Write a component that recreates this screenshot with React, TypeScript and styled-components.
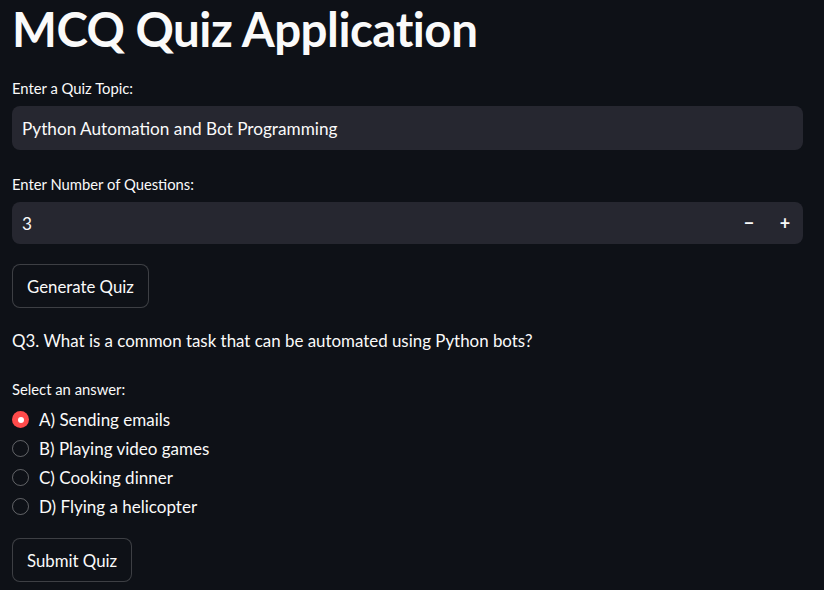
import React from "react";
import styled, { createGlobalStyle } from "styled-components";

const Global = createGlobalStyle`
  html, body { margin: 0; padding: 0; background: #0e1117; }
  body { font-family: Lato, "Noto Sans", sans-serif; color: #fafafa; }
  * { box-sizing: border-box; }
`;

const Page = styled.div`
  width: 824px;
  height: 590px;
  overflow: hidden;
  padding: 0 21px 0 12px;
  display: flex;
  flex-direction: column;
`;

const Title = styled.h1`
  margin: 0;
  font-size: 47.5px;
  font-weight: 700;
  line-height: 58px;
  letter-spacing: -0.5px;
  height: 58px;
`;

const Field = styled.div<{ $mt: number }>`
  margin-top: ${(p) => p.$mt}px;
  display: flex;
  flex-direction: column;
`;

const Label = styled.label<{ $mb?: number }>`
  font-size: 14.8px;
  line-height: 20px;
  height: 20px;
  margin-bottom: ${(p) => p.$mb ?? 8}px;
`;

const InputBox = styled.div<{ $h: number }>`
  height: ${(p) => p.$h}px;
  background: #262730;
  border-radius: 8px;
  display: flex;
  align-items: center;
  padding: 0 0 0 10px;
  font-size: 17.2px;
`;

const Value = styled.span`
  flex: 1;
`;

const Step = styled.span`
  width: 36px;
  text-align: center;
  font-size: 18px;
  font-weight: 700;
`;

const Button = styled.button<{ $mt: number }>`
  margin-top: ${(p) => p.$mt}px;
  align-self: flex-start;
  height: 44px;
  padding: 0 14px;
  background: #0e1117;
  border: 1px solid rgba(250, 250, 250, 0.2);
  border-radius: 8px;
  color: #fafafa;
  font-family: inherit;
  font-size: 16.8px;
`;

const Question = styled.p`
  margin: 20px 0 0;
  font-size: 16.9px;
  line-height: 26px;
`;

const RadioGroup = styled.div`
  display: flex;
  flex-direction: column;
`;

const Option = styled.div`
  display: flex;
  align-items: center;
  height: 29px;
  font-size: 17px;
`;

const Circle = styled.span<{ $on?: boolean }>`
  width: 17px;
  height: 17px;
  border-radius: 50%;
  margin-right: 10px;
  flex: none;
  display: flex;
  align-items: center;
  justify-content: center;
  background: ${(p) => (p.$on ? "#ff4b4b" : "transparent")};
  border: ${(p) => (p.$on ? "none" : "1px solid rgba(250,250,250,0.35)")};
  &::after {
    content: "";
    display: ${(p) => (p.$on ? "block" : "none")};
    width: 6px;
    height: 6px;
    border-radius: 50%;
    background: #fff;
  }
`;

const options = [
  "A) Sending emails",
  "B) Playing video games",
  "C) Cooking dinner",
  "D) Flying a helicopter",
];

export default function App() {
  return (
    <>
      <Global />
      <Page>
        <Title>MCQ Quiz Application</Title>
        <Field $mt={20}>
          <Label>Enter a Quiz Topic:</Label>
          <InputBox $h={44}>
            <Value>Python Automation and Bot Programming</Value>
          </InputBox>
        </Field>
        <Field $mt={24}>
          <Label>Enter Number of Questions:</Label>
          <InputBox $h={42}>
            <Value>3</Value>
            <Step>−</Step>
            <Step>+</Step>
          </InputBox>
        </Field>
        <Button $mt={20}>Generate Quiz</Button>
        <Question>Q3. What is a common task that can be automated using Python bots?</Question>
        <Field $mt={25}>
          <Label $mb={6}>Select an answer:</Label>
          <RadioGroup>
            {options.map((o, i) => (
              <Option key={o}>
                <Circle $on={i === 0} />
                {o}
              </Option>
            ))}
          </RadioGroup>
        </Field>
        <Button $mt={17}>Submit Quiz</Button>
      </Page>
    </>
  );
}
